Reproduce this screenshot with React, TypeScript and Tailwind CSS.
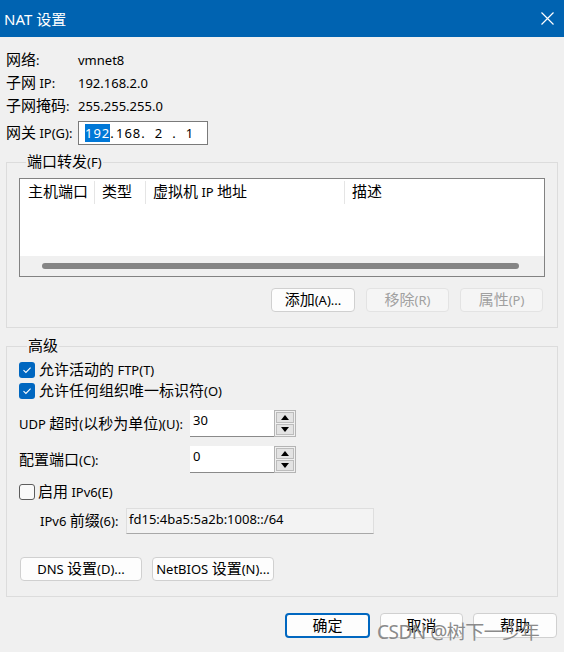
import React from "react";

// CJK glyphs render larger than latin in the original dialog font
function T({ s }: { s: string }) {
  const parts = s.split(/([\u3000-\u9fff\uff00-\uffef]+)/);
  return (
    <span>
      {parts.map((p, i) =>
        /[\u3000-\u9fff\uff00-\uffef]/.test(p) ? (
          <span key={i} className="text-[15px] leading-[16px]">
            {p}
          </span>
        ) : (
          <React.Fragment key={i}>{p}</React.Fragment>
        )
      )}
    </span>
  );
}

function Check({ checked }: { checked: boolean }) {
  if (!checked) {
    return <span className="block w-4 h-4 rounded-[3px] border border-[#5c5c5c] bg-[#f9f9f9]" />;
  }
  return (
    <span className="flex w-4 h-4 rounded-[3px] bg-[#0067c0] items-center justify-center">
      <svg width="10" height="8" viewBox="0 0 10 8">
        <path d="M1.5 4.2 L3.9 6.4 L8.6 1.6" fill="none" stroke="#fff" strokeWidth="1.1" />
      </svg>
    </span>
  );
}

function Spinner() {
  return (
    <div className="w-[22px] h-[27px] border border-[#b4b4b4] p-px flex flex-col gap-px bg-[#f0f0f0]">
      <div className="flex-1 bg-[#e3e3e3] border border-[#bcbcbc] flex items-center justify-center">
        <svg width="8" height="5" viewBox="0 0 8 5">
          <path d="M0 5 L4 0 L8 5Z" fill="#000" />
        </svg>
      </div>
      <div className="flex-1 bg-[#e3e3e3] border border-[#bcbcbc] flex items-center justify-center">
        <svg width="8" height="5" viewBox="0 0 8 5">
          <path d="M0 0 L4 5 L8 0Z" fill="#000" />
        </svg>
      </div>
    </div>
  );
}

function Btn({ w, label, disabled, primary }: { w: string; label: string; disabled?: boolean; primary?: boolean }) {
  const base = "h-full flex items-center justify-center rounded-[4px] leading-[18px]";
  const look = primary
    ? "bg-[#fdfdfd] border-2 border-[#0067c0] text-black"
    : disabled
      ? "bg-[#f5f5f5] border border-[#e3e3e3] text-[#a0a0a0]"
      : "bg-[#fdfdfd] border border-[#d0d0d0] text-black";
  return (
    <div className={`${base} ${look} ${w}`}>
      <T s={label} />
    </div>
  );
}

const info = [
  ["网络:", "vmnet8"],
  ["子网 IP:", "192.168.2.0"],
  ["子网掩码:", "255.255.255.0"],
];

const columns = [
  { label: "主机端口", cls: "w-[75px] pl-[8px] border-r" },
  { label: "类型", cls: "w-[51px] pl-[7px] border-r" },
  { label: "虚拟机 IP 地址", cls: "w-[199px] pl-[7px] border-r" },
  { label: "描述", cls: "flex-1 pl-[7px]" },
];

export default function App() {
  return (
    <div className="relative w-[564px] h-[652px] overflow-hidden bg-[#f0f0f0] text-[13px] text-black font-['Noto_Sans','Noto_Sans_CJK_SC',sans-serif]">
      {/* Title bar */}
      <div className="h-[37px] bg-[#0063b1] flex items-center justify-between pl-[4px] pr-[10px] text-white">
        <span className="text-[15px] leading-[20px]">NAT 设置</span>
        <svg width="13" height="13" viewBox="0 0 13 13">
          <path d="M0.5 0.5 L12.5 12.5 M12.5 0.5 L0.5 12.5" stroke="#fff" strokeWidth="1.2" />
        </svg>
      </div>

      {/* Network info */}
      <div className="pl-[6px] pt-[11px]">
        {info.map(([k, v]) => (
          <div key={k} className="flex items-center h-[23px] leading-[18px]">
            <span className="w-[72px]">
              <T s={k} />
            </span>
            <span>{v}</span>
          </div>
        ))}
        <div className="flex items-center h-[24px] mt-[4px]">
          <span className="w-[72px] leading-[18px]">
            <T s="网关 IP(G):" />
          </span>
          <div className="w-[130px] h-full bg-white border border-[#7a7a7a] flex items-center pl-[6px] leading-[16px] tracking-[1px]">
            <span className="w-[24px] text-center">
              <span className="bg-[#0078d7] text-white">192</span>
            </span>
            <span className="w-[7px] text-center">.</span>
            <span className="w-[24px] text-center">168</span>
            <span className="w-[7px] text-center">.</span>
            <span className="w-[24px] text-center">2</span>
            <span className="w-[7px] text-center">.</span>
            <span className="w-[24px] text-center">1</span>
          </div>
        </div>
      </div>

      {/* Port forwarding */}
      <fieldset className="mx-[6px] mt-[8px] border border-[#dcdcdc] pl-[12px] pr-[12px] pb-[15px]">
        <legend className="ml-[7px] px-px leading-[18px]">
          <T s="端口转发(F)" />
        </legend>
        <div className="mt-[7px] h-[99px] border border-[#828282] bg-white flex flex-col">
          <div className="flex h-[26px] items-center leading-[18px]">
            {columns.map((c) => (
              <div key={c.label} className={`${c.cls} h-[23px] border-[#e5e5e5] flex items-center`}>
                <T s={c.label} />
              </div>
            ))}
          </div>
          <div className="flex-1" />
          <div className="h-[20px] bg-[#f0f0f0] flex items-center pl-[22px]">
            <div className="w-[477px] h-[6px] rounded-full bg-[#858585]" />
          </div>
        </div>
        <div className="mt-[11px] h-[24px] flex justify-end gap-[11px] pr-[2px]">
          <Btn w="w-[84px]" label="添加(A)..." />
          <Btn w="w-[83px]" label="移除(R)" disabled />
          <Btn w="w-[83px]" label="属性(P)" disabled />
        </div>
      </fieldset>

      {/* Advanced */}
      <fieldset className="mx-[6px] mt-[9px] border border-[#dcdcdc] pl-[12px] pr-[12px] pb-[15px]">
        <legend className="ml-[8px] px-px leading-[18px]">
          <T s="高级" />
        </legend>
        <div className="mt-[4px] flex items-center gap-[4px] h-[21px] leading-[18px]">
          <Check checked />
          <T s="允许活动的 FTP(T)" />
        </div>
        <div className="flex items-center gap-[4px] h-[21px] leading-[18px]">
          <Check checked />
          <T s="允许任何组织唯一标识符(O)" />
        </div>

        <div className="mt-[9px] flex items-center h-[27px]">
          <span className="w-[171px] leading-[18px]">
            <T s="UDP 超时(以秒为单位)(U):" />
          </span>
          <div className="w-[84px] h-full bg-white border-b border-[#8a8a8a] pl-[3px] pt-px leading-[18px]">30</div>
          <Spinner />
        </div>
        <div className="mt-[9px] flex items-center h-[27px]">
          <span className="w-[171px] leading-[18px]">
            <T s="配置端口(C):" />
          </span>
          <div className="w-[84px] h-full bg-white border-b border-[#8a8a8a] pl-[3px] pt-px leading-[18px]">0</div>
          <Spinner />
        </div>

        <div className="mt-[8px] flex items-center gap-[3px] h-[21px] leading-[18px]">
          <Check checked={false} />
          <T s="启用 IPv6(E)" />
        </div>
        <div className="mt-[6px] flex items-center h-[26px] pl-[21px]">
          <span className="w-[86px] leading-[18px]">
            <T s="IPv6 前缀(6):" />
          </span>
          <div className="w-[248px] h-full bg-[#f3f3f3] border border-[#dedede] border-b-[#a8a8a8] pl-[2px] pt-px leading-[18px]">
            fd15:4ba5:5a2b:1008::/64
          </div>
        </div>

        <div className="mt-[23px] h-[24px] flex gap-[10px] pl-[1px]">
          <Btn w="w-[122px]" label="DNS 设置(D)..." />
          <Btn w="w-[122px]" label="NetBIOS 设置(N)..." />
        </div>
      </fieldset>

      {/* Dialog buttons */}
      <div className="mt-[16px] h-[25px] flex justify-end gap-[10px] pr-[7px]">
        <Btn w="w-[85px]" label="确定" primary />
        <Btn w="w-[83px]" label="取消" />
        <Btn w="w-[84px]" label="帮助" />
      </div>

      {/* Watermark */}
      <div className="absolute left-[377px] top-[619px] text-[19px] leading-[26px] tracking-[-0.5px] text-[#8a8a8a] pointer-events-none">
        CSDN @树下一少年
      </div>
    </div>
  );
}
